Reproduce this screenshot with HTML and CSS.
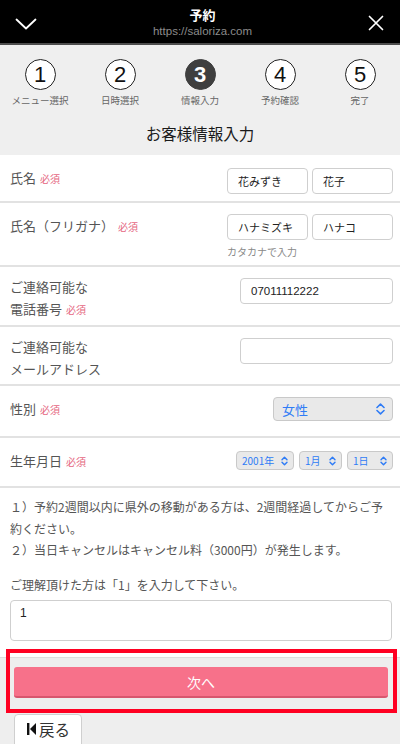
FILE: index.html
```html
<!DOCTYPE html>
<html lang="ja">
<head>
<meta charset="utf-8">
<title>予約</title>
<link rel="stylesheet" href="styles.css">
</head>
<body>
<header class="topbar">
  <svg class="topbar-icon" width="22" height="12" viewBox="0 0 22 12"><path d="M1.5 1.5 L11 10.5 L20.5 1.5" fill="none" stroke="#fff" stroke-width="1.8" stroke-linecap="round" stroke-linejoin="round"/></svg>
  <div class="topbar-title">
    <div class="topbar-name">予約</div>
    <div class="topbar-url">https://saloriza.com</div>
  </div>
  <svg class="topbar-icon" width="16" height="16" viewBox="0 0 16 16"><path d="M1.5 1.5 L14.5 14.5 M14.5 1.5 L1.5 14.5" fill="none" stroke="#fff" stroke-width="1.7" stroke-linecap="round"/></svg>
</header>

<section class="steps-area">
  <ol class="steps">
    <li class="step"><span class="step-num">1</span><span class="step-label">メニュー選択</span></li>
    <li class="step"><span class="step-num">2</span><span class="step-label">日時選択</span></li>
    <li class="step step--active"><span class="step-num">3</span><span class="step-label">情報入力</span></li>
    <li class="step"><span class="step-num">4</span><span class="step-label">予約確認</span></li>
    <li class="step"><span class="step-num">5</span><span class="step-label">完了</span></li>
  </ol>
  <h1 class="page-title">お客様情報入力</h1>
</section>

<main class="form">
  <div class="row row--name">
    <div class="label">氏名<span class="req">必須</span></div>
    <div class="controls">
      <div class="pair">
        <div class="input input--half">花みずき</div>
        <div class="input input--half">花子</div>
      </div>
    </div>
  </div>
  <div class="row row--kana">
    <div class="label">氏名（フリガナ）<span class="req">必須</span></div>
    <div class="controls">
      <div class="pair">
        <div class="input input--half">ハナミズキ</div>
        <div class="input input--half">ハナコ</div>
      </div>
      <div class="hint">カタカナで入力</div>
    </div>
  </div>
  <div class="row row--tel">
    <div class="label">ご連絡可能な<br>電話番号<span class="req">必須</span></div>
    <div class="controls">
      <div class="input input--wide">07011112222</div>
    </div>
  </div>
  <div class="row row--mail">
    <div class="label">ご連絡可能な<br>メールアドレス</div>
    <div class="controls">
      <div class="input input--wide"></div>
    </div>
  </div>
  <div class="row row--sex">
    <div class="label">性別<span class="req">必須</span></div>
    <div class="controls">
      <div class="select select--sex"><span>女性</span>
        <svg width="9" height="12" viewBox="0 0 9 12"><path d="M1 4.5 L4.5 1.2 L8 4.5 M1 7.5 L4.5 10.8 L8 7.5" fill="none" stroke="#2f7cf6" stroke-width="1.6" stroke-linecap="round" stroke-linejoin="round"/></svg>
      </div>
    </div>
  </div>
  <div class="row row--birth">
    <div class="label">生年月日<span class="req">必須</span></div>
    <div class="controls">
      <div class="dates">
        <div class="select select--small select--year"><span>2001年</span>
          <svg width="7" height="10" viewBox="0 0 7 10"><path d="M1 3.8 L3.5 1.2 L6 3.8 M1 6.2 L3.5 8.8 L6 6.2" fill="none" stroke="#2f7cf6" stroke-width="1.4" stroke-linecap="round" stroke-linejoin="round"/></svg>
        </div>
        <div class="select select--small select--month"><span>1月</span>
          <svg width="7" height="10" viewBox="0 0 7 10"><path d="M1 3.8 L3.5 1.2 L6 3.8 M1 6.2 L3.5 8.8 L6 6.2" fill="none" stroke="#2f7cf6" stroke-width="1.4" stroke-linecap="round" stroke-linejoin="round"/></svg>
        </div>
        <div class="select select--small select--day"><span>1日</span>
          <svg width="7" height="10" viewBox="0 0 7 10"><path d="M1 3.8 L3.5 1.2 L6 3.8 M1 6.2 L3.5 8.8 L6 6.2" fill="none" stroke="#2f7cf6" stroke-width="1.4" stroke-linecap="round" stroke-linejoin="round"/></svg>
        </div>
      </div>
    </div>
  </div>

  <div class="notes">
    <p class="notes-text">１）予約2週間以内に県外の移動がある方は、2週間経過してからご予約ください。<br>２）当日キャンセルはキャンセル料（3000円）が発生します。</p>
    <p class="notes-text">ご理解頂けた方は「1」を入力して下さい。</p>
    <div class="textarea">1</div>
  </div>
</main>

<footer class="footer">
  <div class="highlight"></div>
  <button class="btn-next" type="button">次へ</button>
  <button class="btn-back" type="button">
    <svg width="9" height="12" viewBox="0 0 9 12"><rect x="0" y="0" width="2.4" height="12" fill="#111"/><path d="M9 0 L3 6 L9 12 Z" fill="#111"/></svg>
    <span>戻る</span>
  </button>
</footer>
</body>
</html>
```

FILE: styles.css
```css
* { box-sizing: border-box; }
html, body { margin: 0; padding: 0; }
body {
  width: 400px;
  height: 744px;
  overflow: hidden;
  background: #eeeeee;
  font-family: "Noto Sans CJK JP", "Noto Sans", sans-serif;
  color: #333;
}

.topbar {
  height: 45px;
  background: #000;
  border-bottom: 2px solid #4d4d4d;
  display: flex;
  align-items: center;
  justify-content: space-between;
  padding: 0 16px 0 15px;
}
.topbar-icon { display: block; }
.topbar-icon:first-child { margin-top: 4px; }
.topbar-icon:last-child { margin-top: 2px; }
.topbar-title {
  text-align: center;
  margin-top: 2px;
}
.topbar-name {
  color: #fff;
  font-size: 13px;
  font-weight: 700;
  line-height: 17px;
}
.topbar-url {
  color: #8c8c8c;
  font-family: "Liberation Sans", "Noto Sans", sans-serif;
  font-size: 11.5px;
  line-height: 15px;
  margin-top: 1px;
}

.steps-area {
  background: #efefef;
  padding: 14px 0 12px;
}
.steps {
  list-style: none;
  margin: 0;
  padding: 0;
  display: grid;
  grid-template-columns: repeat(5, 1fr);
}
.step {
  display: flex;
  flex-direction: column;
  align-items: center;
}
.step-num {
  width: 31px;
  height: 31px;
  border: 1.5px solid #222;
  border-radius: 50%;
  background: #fff;
  display: flex;
  align-items: center;
  justify-content: center;
  font-family: "Liberation Sans", "Noto Sans", sans-serif;
  font-size: 22px;
  color: #111;
  line-height: 1;
}
.step--active .step-num {
  background: #3f3f3f;
  border-color: #3f3f3f;
  color: #fff;
  font-weight: 700;
}
.step-label {
  margin-top: 3px;
  font-size: 9.5px;
  line-height: 14px;
  color: #666;
}
.page-title {
  margin: 16px 0 0;
  text-align: center;
  font-size: 15.5px;
  font-weight: 400;
  line-height: 20px;
  color: #1a1a1a;
}

.form {
  background: #fff;
  padding-bottom: 16px;
}
.row {
  display: flex;
  justify-content: space-between;
  align-items: flex-start;
  padding: 11px 7px 0 10px;
  border-bottom: 2px solid #e2e2e2;
}
.row--name { height: 48px; }
.row--kana { height: 64px; }
.row--tel { height: 60px; }
.row--mail { height: 59px; }
.row--sex { height: 52px; }
.row--birth { height: 50px; }

.label {
  font-size: 13px;
  line-height: 22px;
  color: #555;
  padding-top: 1px;
}
.row--tel .label, .row--mail .label { padding-top: 0; margin-top: -2px; }
.req {
  color: #e5677f;
  font-size: 10px;
  margin-left: 4px;
}
.controls {
  display: flex;
  flex-direction: column;
  align-items: flex-start;
}
.pair {
  display: flex;
  gap: 4px;
}
.row--name .pair { margin-top: 2px; }
.input {
  height: 26px;
  border: 1px solid #cfcfcf;
  border-radius: 4px;
  background: #fff;
  font-size: 11px;
  line-height: 24px;
  padding: 0 10px;
  color: #222;
  white-space: nowrap;
  overflow: hidden;
}
.input--half { width: 81px; }
.input--wide {
  width: 153px;
  font-family: "Liberation Sans", "Noto Sans", sans-serif;
  font-size: 11.5px;
}
.hint {
  margin-top: 5px;
  font-size: 10px;
  line-height: 14px;
  color: #888;
}

.select {
  display: flex;
  align-items: center;
  justify-content: space-between;
  background: #e9e9e9;
  border: 1px solid #c9c9c9;
  border-radius: 4px;
  color: #2f7cf6;
  white-space: nowrap;
}
.select svg { display: block; flex: none; }
.select--sex {
  width: 120px;
  height: 24px;
  padding: 0 7px 0 8px;
  font-size: 13px;
}
.dates {
  display: flex;
  gap: 5px;
  margin-top: 2px;
}
.select--small {
  height: 19px;
  font-size: 10px;
  padding: 0 5px 0 5px;
}
.select--year { width: 58px; }
.select--month { width: 43px; }
.select--day { width: 46px; }

.notes {
  padding: 8px 8px 0 10px;
}
.notes-text {
  margin: 0 0 13px;
  font-size: 12px;
  line-height: 21.5px;
  color: #555;
}
.notes-text:last-of-type { margin-bottom: 5px; }
.textarea {
  width: 382px;
  height: 41px;
  border: 1px solid #cfcfcf;
  border-radius: 4px;
  padding: 5px 9px;
  font-family: "Liberation Sans", "Noto Sans", sans-serif;
  font-size: 12px;
  color: #222;
}

.footer {
  position: relative;
  border-top: 1px solid #dedede;
  background: #eeeeee;
  padding: 9px 12px 0 14px;
}
.highlight {
  position: absolute;
  left: 6px;
  right: 3px;
  top: -9px;
  height: 64px;
  border: 4px solid #ff0022;
  pointer-events: none;
}
.btn-next {
  display: block;
  width: 374px;
  height: 31px;
  border: 0;
  border-bottom: 2px solid #d8566e;
  border-radius: 3px;
  background: #f7718a;
  color: #fff;
  font-family: "Noto Sans CJK JP", sans-serif;
  font-size: 14px;
}
.btn-back {
  margin-top: 16px;
  display: flex;
  align-items: center;
  gap: 3px;
  height: 34px;
  width: 68px;
  padding: 0 0 4px 12px;
  background: #fff;
  border: 1px solid #cfcfcf;
  border-radius: 4px;
  font-family: "Noto Sans CJK JP", sans-serif;
  font-size: 15.5px;
  color: #333;
}
```
